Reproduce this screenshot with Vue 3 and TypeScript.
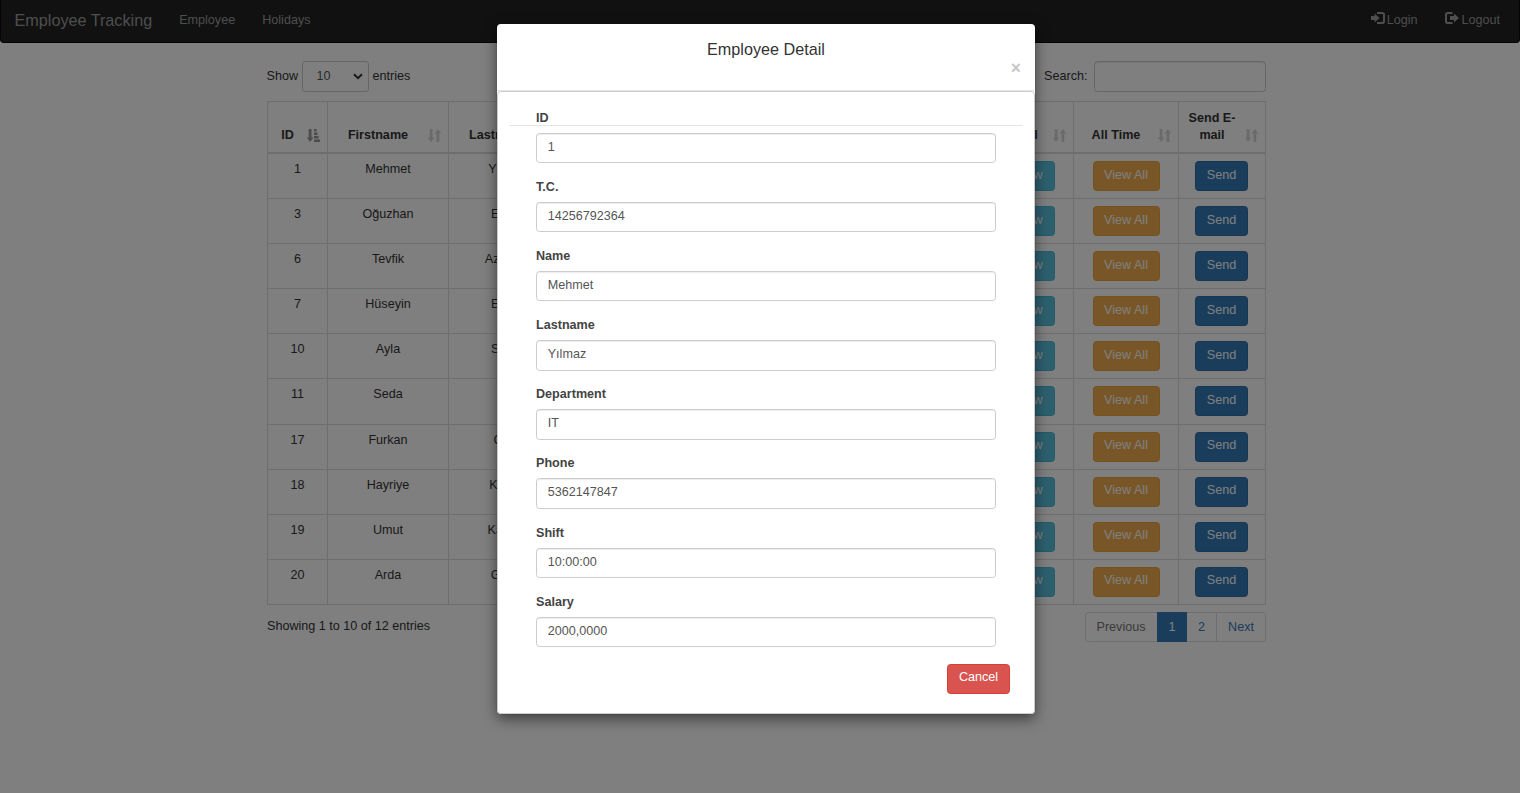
<script setup lang="ts">
interface Employee {
  id: number
  first: string
  last: string
}

const employees: Employee[] = [
  { id: 1, first: 'Mehmet', last: 'Yılmaz' },
  { id: 3, first: 'Oğuzhan', last: 'Ersan' },
  { id: 6, first: 'Tevfik', last: 'Azmanlı' },
  { id: 7, first: 'Hüseyin', last: 'Ersan' },
  { id: 10, first: 'Ayla', last: 'Sezer' },
  { id: 11, first: 'Seda', last: 'Ay' },
  { id: 17, first: 'Furkan', last: 'Çelik' },
  { id: 18, first: 'Hayriye', last: 'Korkut' },
  { id: 19, first: 'Umut', last: 'Karaca' },
  { id: 20, first: 'Arda', last: 'Gönül' },
]

const columns: { label: string; cls: string }[] = [
  { label: 'ID', cls: 'asc' },
  { label: 'Firstname', cls: '' },
  { label: 'Lastname', cls: '' },
  { label: 'Department', cls: '' },
  { label: 'Phone', cls: '' },
  { label: 'Shift', cls: '' },
  { label: 'Detail', cls: '' },
  { label: 'All Time', cls: '' },
  { label: 'Send E-mail', cls: '' },
]

const fields: { label: string; value: string }[] = [
  { label: 'ID', value: '1' },
  { label: 'T.C.', value: '14256792364' },
  { label: 'Name', value: 'Mehmet' },
  { label: 'Lastname', value: 'Yılmaz' },
  { label: 'Department', value: 'IT' },
  { label: 'Phone', value: '5362147847' },
  { label: 'Shift', value: '10:00:00' },
  { label: 'Salary', value: '2000,0000' },
]
</script>

<template>
  <div class="page">
    <nav class="navbar">
      <a class="brand">Employee Tracking</a>
      <a class="nav-link">Employee</a>
      <a class="nav-link">Holidays</a>
      <div class="nav-right">
        <a class="nav-link">
          <svg class="glyph" viewBox="0 0 14 12">
            <path d="M6 1h5.200Q13 1 13 2.800v6.400Q13 11 11.200 11H6" fill="none" stroke="currentColor" stroke-width="2" />
            <path d="M0 4h3.600V1.600L8.600 6l-5 4.400V8H0z" fill="currentColor" />
          </svg>Login</a>
        <a class="nav-link">
          <svg class="glyph" viewBox="0 0 14 12">
            <path d="M7.500 1H2.800Q1 1 1 2.800v6.400Q1 11 2.800 11H7.500" fill="none" stroke="currentColor" stroke-width="2" />
            <path d="M5 4h4V1.600L14 6l-5 4.400V8H5z" fill="currentColor" />
          </svg>Logout</a>
      </div>
    </nav>

    <main class="container">
      <div class="controls">
        <div class="length">
          <span>Show</span>
          <div class="select">
            <span>10</span>
            <svg viewBox="0 0 10 7"><path d="M1 1.200l4 4 4-4" fill="none" stroke="#333" stroke-width="2" /></svg>
          </div>
          <span>entries</span>
        </div>
        <div class="search">
          <span>Search:</span>
          <div class="search-box"></div>
        </div>
      </div>

      <div class="table">
        <div class="tr head">
          <div v-for="c in columns" :key="c.label" class="th">
            <span>{{ c.label }}</span>
            <svg v-if="c.cls === 'asc'" class="sort on" viewBox="0 0 13 13">
              <path d="M1.700 0h2.800v8.500H6.400L3.100 13-.2 8.500h1.900z" />
              <path d="M7 0h2.600v2.500H7zM7 3.400h3.600v2.500H7zM7 6.900h4.600v2.500H7zM7 10.400h6v2.500H7z" />
            </svg>
            <svg v-else class="sort" viewBox="0 0 13 13">
              <path d="M1.700 0h2.800v8.500H6.400L3.100 13-.2 8.500h1.900z" />
              <path d="M8.500 13h2.800V4.500H13.200L9.900 0 6.600 4.500h1.900z" />
            </svg>
          </div>
        </div>
        <div v-for="e in employees" :key="e.id" class="tr row">
          <div class="td">{{ e.id }}</div>
          <div class="td">{{ e.first }}</div>
          <div class="td">{{ e.last }}</div>
          <div class="td"></div>
          <div class="td"></div>
          <div class="td"></div>
          <div class="td"><button class="btn info">View</button></div>
          <div class="td"><button class="btn warning">View All</button></div>
          <div class="td"><button class="btn primary">Send</button></div>
        </div>
      </div>

      <div class="footer">
        <span class="info-text">Showing 1 to 10 of 12 entries</span>
        <div class="pagination">
          <a class="pg prev">Previous</a>
          <a class="pg active">1</a>
          <a class="pg two">2</a>
          <a class="pg next">Next</a>
        </div>
      </div>
    </main>

    <div class="overlay">
      <div class="modal">
        <div class="modal-header">
          <h4>Employee Detail</h4>
          <span class="close">×</span>
        </div>
        <div class="modal-inner">
          <hr class="rule" />
          <div class="form">
            <div v-for="f in fields" :key="f.label" class="group">
              <label>{{ f.label }}</label>
              <div class="control">{{ f.value }}</div>
            </div>
          </div>
          <div class="actions"><button class="btn danger">Cancel</button></div>
        </div>
      </div>
    </div>
  </div>
</template>

<style>
body {
  margin: 0;
  background: #fff;
}
</style>

<style scoped>
.page {
  box-sizing: border-box;
  width: 1520px;
  height: 793px;
  overflow: hidden;
  position: relative;
  font-family: "Liberation Sans", Arial, sans-serif;
  font-size: 12.6px;
  line-height: 18px;
  color: #333;
  background: #fff;
}
.page * {
  box-sizing: border-box;
}
.navbar {
  height: 43px;
  display: flex;
  align-items: center;
  padding: 0 5.5px 3px 0;
  background: #222;
  border: 1px solid #080808;
  border-top: 0;
  border-radius: 0 0 4px 4px;
  color: #9d9d9d;
}
.brand {
  font-size: 16.2px;
  padding: 1px 13.5px 0;
}
.nav-link {
  padding: 0 13.5px;
  display: flex;
  align-items: center;
}
.nav-right {
  margin-left: auto;
  display: flex;
}
.nav-right .nav-link:first-child {
  padding-right: 14.5px;
}
.glyph {
  width: 14px;
  height: 12px;
  margin: -3px 2px 0 0;
}
.container {
  width: 999px;
  margin: 18px 0 0 267px;
}
.controls {
  display: flex;
  justify-content: space-between;
  height: 31px;
}
.length,
.search {
  display: flex;
  align-items: center;
}
.length {
  margin-left: -0.5px;
}
.length > span,
.search > span {
  padding-bottom: 2px;
}
.select {
  width: 67px;
  height: 31px;
  margin: 0 4px 0 3.5px;
  padding: 0 5px 2px 14px;
  display: flex;
  align-items: center;
  justify-content: space-between;
  border: 1px solid #ccc;
  border-radius: 3px;
  color: #555;
}
.select svg {
  width: 10px;
  height: 7px;
  margin-top: 2px;
}
.search-box {
  width: 172px;
  height: 31px;
  margin-left: 6.5px;
  border: 1px solid #ccc;
  border-radius: 3.5px;
  box-shadow: inset 0 1px 1px rgba(0, 0, 0, 0.075);
}
.table {
  margin-top: 9px;
  border-top: 1px solid #ddd;
  border-left: 1px solid #ddd;
}
.tr {
  display: grid;
  grid-template-columns: 60px 121px 120px 110px 110px 86px 199px 105px 87px;
}
.head .th {
  height: 52px;
  border-right: 1px solid #ddd;
  border-bottom: 2px solid #ddd;
  padding: 0 27px 8.5px 7px;
  display: flex;
  align-items: flex-end;
  justify-content: center;
  text-align: center;
  font-weight: bold;
  line-height: 17px;
  position: relative;
}
.head .th:nth-child(7) {
  padding-left: 120px;
}
.sort {
  position: absolute;
  right: 7px;
  bottom: 10px;
  width: 13px;
  height: 13px;
  fill: #333;
  opacity: 0.2;
  overflow: visible;
}
.sort.on {
  opacity: 0.5;
}
.row {
  height: 45.1px;
}
.td {
  border-right: 1px solid #ddd;
  border-bottom: 1px solid #ddd;
  padding-top: 6px;
  text-align: center;
}
.td:nth-child(3) {
  padding-right: 2px;
}
.td:nth-child(7) {
  text-align: right;
  padding-right: 18px;
}
.td:nth-child(9) {
  padding-right: 1px;
}
.btn {
  display: inline-block;
  height: 30px;
  padding: 0 0 3px;
  border: 1px solid;
  border-radius: 3.5px;
  font: inherit;
  line-height: 18px;
  color: #fff;
  vertical-align: top;
}
.td .btn {
  margin-top: 1px;
}
.primary {
  width: 53px;
  background: #337ab7;
  border-color: #2e6da4;
}
.warning {
  width: 67px;
  background: #f0ad4e;
  border-color: #eea236;
}
.info {
  width: 52px;
  background: #5bc0de;
  border-color: #46b8da;
}
.danger {
  width: 63px;
  background: #d9534f;
  border-color: #d43f3a;
}
.footer {
  display: flex;
  justify-content: space-between;
  margin-top: 7px;
}
.info-text {
  padding-top: 5px;
}
.pagination {
  display: flex;
  height: 30px;
  border: 1px solid #ddd;
  border-radius: 3.5px;
}
.pg {
  display: flex;
  justify-content: center;
  padding-top: 5px;
  color: #337ab7;
}
.prev {
  width: 71px;
  padding-right: 1px;
  color: #777;
}
.active {
  width: 30px;
  margin: -1px 0;
  padding-top: 6px;
  background: #337ab7;
  color: #fff;
}
.two {
  width: 30px;
  border-right: 1px solid #ddd;
}
.next {
  width: 48px;
}
.overlay {
  position: absolute;
  inset: 0;
  display: flex;
  align-items: flex-start;
  padding: 24px 0 0 497px;
  background: rgba(0, 0, 0, 0.5);
}
.modal {
  width: 538px;
  height: 690px;
  display: flex;
  flex-direction: column;
  background: #fff;
  border-radius: 4px;
  box-shadow: 0 5px 14px rgba(0, 0, 0, 0.5), 0 0 1px rgba(0, 0, 0, 0.5);
}
.modal-header {
  height: 67px;
  display: flex;
  flex-direction: column;
  padding: 16px 14px 0;
  border-bottom: 1px solid #e5e5e5;
}
.modal-header h4 {
  margin: 0;
  font-size: 16.2px;
  font-weight: normal;
  line-height: 18px;
  text-align: center;
}
.close {
  align-self: flex-end;
  padding-top: 0.5px;
  font-size: 17.5px;
  font-weight: bold;
  line-height: 19px;
  color: #000;
  opacity: 0.22;
}
.modal-inner {
  flex: 1;
  border: 1px solid #ccc;
  border-radius: 4px;
  padding: 33px 11px 0;
}
.rule {
  height: 1px;
  margin: 0;
  border: 0;
  background: #e5e5e5;
}
.form {
  margin-top: -17px;
  padding: 0 27px;
}
.group {
  height: 69.1px;
}
label {
  display: block;
  height: 24px;
  font-weight: bold;
  color: #444;
}
.control {
  height: 30.3px;
  padding: 4px 10.7px 0;
  border: 1px solid #ccc;
  border-radius: 3.5px;
  background: #fff;
  color: #555;
  box-shadow: inset 0 1px 1px rgba(0, 0, 0, 0.075);
}
.actions {
  display: flex;
  justify-content: flex-end;
  padding: 2px 13px 0 0;
}
</style>
